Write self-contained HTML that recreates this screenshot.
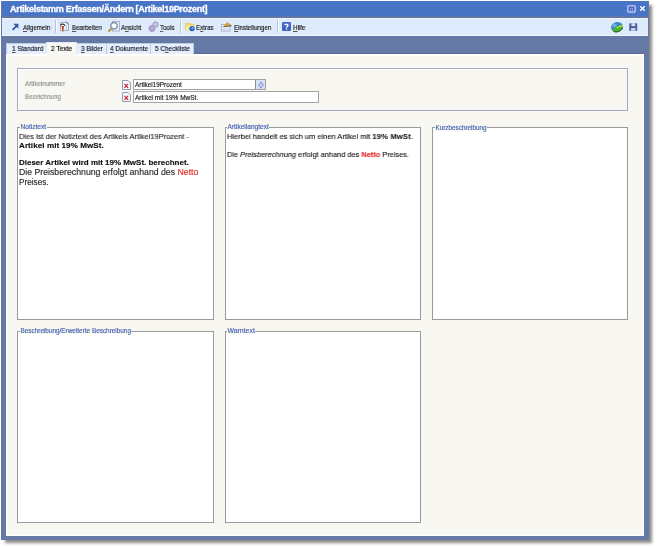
<!DOCTYPE html>
<html><head><meta charset="utf-8">
<style>
*{margin:0;padding:0;box-sizing:border-box}
html,body{width:658px;height:548px;overflow:hidden;background:#fff;font-family:"Liberation Sans",sans-serif}
.a{position:absolute}
.t{position:absolute;white-space:nowrap;line-height:1;will-change:transform;-webkit-text-stroke:0.15px currentColor}
.box{position:absolute;background:#fff;border:1px solid #9a9a9a}
u{text-decoration:underline;text-underline-offset:1px;text-decoration-thickness:0.6px;text-decoration-color:#555}
</style></head><body>
<div class="a" style="left:5px;top:5px;width:647px;height:538px;background:#8a8a88;filter:blur(1.8px)"></div>
<div class="a" style="left:1px;top:1px;width:648px;height:539px;background:#6678a4"></div>
<div class="a" style="left:2px;top:1px;width:646px;height:15px;background:#4874c6"></div>
<div class="a" style="left:1px;top:16px;width:648px;height:2px;background:#6176a6"></div>
<div class="a" style="left:2px;top:18px;width:646px;height:1px;background:#eef5fe"></div>
<div class="a" style="left:2px;top:19px;width:646px;height:16px;background:#deebfd"></div>
<div class="a" style="left:2px;top:35px;width:646px;height:1px;background:#f2f7fe"></div>
<div class="a" style="left:2px;top:36px;width:646px;height:18px;background:#6479a6"></div>
<div class="a" style="left:6px;top:53px;width:638px;height:1px;background:#5b6d9a"></div>
<div class="a" style="left:6px;top:54px;width:638px;height:482px;background:#f8f7f2;border:1px solid #fff;border-top-width:2px"></div>
<div class="t" style="left:10.00px;top:4.90px;font-size:9.1px;color:#fff;font-weight:bold;letter-spacing:-0.34px;-webkit-text-stroke:0.3px #fff;">Artikelstamm Erfassen/Ändern [Artikel19Prozent]</div>
<svg class="a" style="left:627px;top:5px" width="9" height="8" viewBox="0 0 9 8"><rect x="0.4" y="0.4" width="8.2" height="7.2" rx="1.6" fill="#86a0e2" stroke="#c4d2f6" stroke-width="0.8"/><path d="M2.5 5.5V2.3H6.5V5.5" stroke="#3a56a6" stroke-width="0.9" fill="none"/><rect x="4" y="3.8" width="1" height="1.6" fill="#3a56a6"/></svg>
<svg class="a" style="left:639px;top:5px" width="7" height="7" viewBox="0 0 7 7"><path d="M1.2 1.2L5.8 5.8M5.8 1.2L1.2 5.8" stroke="#fff" stroke-width="1.25"/></svg>
<svg class="a" style="left:11px;top:23px" width="8" height="8" viewBox="0 0 8 8"><path d="M1.6 6.9L5.6 2.9" stroke="#3456a8" stroke-width="1.9" fill="none"/><path d="M2.4 0.8H7.4V5.8Z" fill="#3456a8"/></svg>
<div class="t" style="left:22.70px;top:23.50px;font-size:7.4399999999999995px;color:#111;transform:scaleX(0.8333);transform-origin:0 0;"><u>A</u>llgemein</div>
<div class="a" style="left:55px;top:20px;width:1px;height:13px;background:#b9c3d6"></div>
<div class="a" style="left:56px;top:20px;width:1px;height:13px;background:#fff"></div>
<svg class="a" style="left:56px;top:18px" width="16" height="16" viewBox="0 0 16 16"><path d="M4.5 4.5H10.5L12.5 6.5V12.5H4.5Z" fill="#eef3fa" stroke="#a2aec4" stroke-width="1"/><path d="M10.2 3.8L12.8 6.6" stroke="#6a7890" stroke-width="1.1"/><path d="M10.5 7.5V12" stroke="#b4c0d4" stroke-width="1"/><path d="M4.4 7.4C5 5.8 8.2 5.6 9 7.8" stroke="#3c3c40" stroke-width="1.3" fill="none"/><path d="M5.5 8H8.1L7.4 13.3Q6.9 14.3 6.3 13.3Z" fill="#c44a2a"/></svg>
<div class="t" style="left:71.90px;top:23.50px;font-size:7.4399999999999995px;color:#111;transform:scaleX(0.8333);transform-origin:0 0;"><u>B</u>earbeiten</div>
<svg class="a" style="left:104px;top:18px" width="18" height="16" viewBox="0 0 18 16"><rect x="8.5" y="3.5" width="7" height="9.5" fill="#e6eef8" stroke="#a4b2c8"/><circle cx="10" cy="7.8" r="3.2" fill="#f6f9fd" stroke="#7e8ba6" stroke-width="1.3"/><path d="M7.6 10.5L5 13" stroke="#b39652" stroke-width="2.1" stroke-linecap="round"/></svg>
<div class="t" style="left:120.90px;top:23.50px;font-size:7.4399999999999995px;color:#111;transform:scaleX(0.8333);transform-origin:0 0;">A<u>n</u>sicht</div>
<svg class="a" style="left:147.5px;top:20.8px" width="11" height="12" viewBox="0 0 11 12"><circle cx="4" cy="7.5" r="3" fill="#b3aed0" stroke="#9a94bc"/><circle cx="7.5" cy="3.5" r="2.6" fill="#c9c4e0" stroke="#9a94bc"/></svg>
<div class="t" style="left:159.90px;top:23.50px;font-size:7.4399999999999995px;color:#111;transform:scaleX(0.8333);transform-origin:0 0;"><u>T</u>ools</div>
<div class="a" style="left:180px;top:20px;width:1px;height:13px;background:#b9c3d6"></div>
<div class="a" style="left:181px;top:20px;width:1px;height:13px;background:#fff"></div>
<svg class="a" style="left:182px;top:18px" width="16" height="16" viewBox="0 0 16 16"><path d="M3.5 5H7L8 6H12V12H3.5Z" fill="#efd86e" stroke="#e2cc74" stroke-width="0.8"/><path d="M4.5 7.5H13L11.8 12.5H3.5Z" fill="#f9ee9c"/><circle cx="10" cy="10.6" r="2.7" fill="#1f5fc8"/><circle cx="10.4" cy="10.2" r="1.1" fill="#7fb8f4"/></svg>
<div class="t" style="left:196.30px;top:23.50px;font-size:7.4399999999999995px;color:#111;transform:scaleX(0.8333);transform-origin:0 0;">E<u>x</u>tras</div>
<svg class="a" style="left:218px;top:18px" width="16" height="16" viewBox="0 0 16 16"><rect x="3.5" y="6.5" width="8.5" height="6.5" fill="#f2f6fc" stroke="#a6b4ca"/><path d="M3.8 10.5H11.8V12.8H3.8Z" fill="#cfdcee"/><path d="M5 8.8L9.2 4L13.8 7.6Z" fill="#d6a63a"/><path d="M5.2 8.9L13.6 7.7" stroke="#5e4a22" stroke-width="0.9"/></svg>
<div class="t" style="left:233.50px;top:23.50px;font-size:7.4399999999999995px;color:#111;transform:scaleX(0.8333);transform-origin:0 0;"><u>E</u>instellungen</div>
<div class="a" style="left:277px;top:20px;width:1px;height:13px;background:#b9c3d6"></div>
<div class="a" style="left:278px;top:20px;width:1px;height:13px;background:#fff"></div>
<svg class="a" style="left:282px;top:22px" width="9" height="9" viewBox="0 0 9 9"><rect x="0" y="0" width="9" height="9" rx="1.3" fill="#3f62bf"/><path d="M1 1H8V3.5H1Z" fill="#6a88d6" opacity="0.5"/><path d="M3 3.3C3 1.9 6 1.9 6 3.5C6 4.6 4.5 4.6 4.5 5.8" stroke="#fff" stroke-width="1.3" fill="none"/><rect x="3.8" y="6.5" width="1.4" height="1.3" fill="#fff"/></svg>
<div class="t" style="left:293.00px;top:23.50px;font-size:7.4399999999999995px;color:#111;transform:scaleX(0.8333);transform-origin:0 0;"><u>H</u>ilfe</div>
<svg class="a" style="left:610px;top:21px" width="14" height="12" viewBox="0 0 14 12"><ellipse cx="7" cy="6" rx="6" ry="5" transform="rotate(-15 7 6)" fill="#3588c8"/><ellipse cx="4.5" cy="4.5" rx="2.5" ry="1.8" fill="#6ab0e0"/><path d="M2.2 9.8C4 6.2 8.5 3.4 12.9 4.4C13.2 8 10 11.2 5.8 11.2Z" fill="#4cb232"/><path d="M6.5 6.8C8.5 4.8 10.8 4 12.8 4.2L12.9 5.6C11 5.3 9 6 7.2 7.6Z" fill="#e4e048"/><path d="M3.5 10.5C7 11.8 11 10.2 12.7 6.8" stroke="#1f5a1c" stroke-width="1" fill="none"/></svg>
<svg class="a" style="left:629px;top:22.5px" width="9" height="8" viewBox="0 0 9 8"><path d="M0.3 0.3H8.2V7.8H0.3Z" fill="#4a5a9e"/><rect x="2.4" y="0.3" width="3.8" height="2.8" fill="#d8def0"/><rect x="2" y="5" width="4.6" height="2.8" fill="#c8d0e8"/></svg>
<div class="a" style="left:6px;top:43px;width:41px;height:11px;background:#e6eefb;border:1px solid #bccae2;border-bottom:none"></div>
<div class="t" style="left:11.90px;top:45.37px;font-size:7.359999999999999px;color:#0a1428;transform:scaleX(0.8696);transform-origin:0 0;"><u>1</u> Standard</div>
<div class="a" style="left:76px;top:43px;width:31px;height:11px;background:#e6eefb;border:1px solid #bccae2;border-bottom:none"></div>
<div class="t" style="left:80.50px;top:45.37px;font-size:7.359999999999999px;color:#0a1428;transform:scaleX(0.8696);transform-origin:0 0;"><u>3</u> Bilder</div>
<div class="a" style="left:106px;top:43px;width:45px;height:11px;background:#e6eefb;border:1px solid #bccae2;border-bottom:none"></div>
<div class="t" style="left:109.70px;top:45.37px;font-size:7.359999999999999px;color:#0a1428;transform:scaleX(0.8696);transform-origin:0 0;"><u>4</u> Dokumente</div>
<div class="a" style="left:150px;top:43px;width:44px;height:11px;background:#e6eefb;border:1px solid #bccae2;border-bottom:none"></div>
<div class="t" style="left:155.30px;top:45.37px;font-size:7.359999999999999px;color:#0a1428;transform:scaleX(0.8696);transform-origin:0 0;">5 C<u>h</u>eckliste</div>
<div class="a" style="left:46px;top:42px;width:31px;height:12px;background:#f8f7f2;border:1px solid #e4e8f0;border-bottom:none"></div>
<div class="t" style="left:50.60px;top:45.08px;font-size:7.589999999999999px;color:#000;transform:scaleX(0.8696);transform-origin:0 0;">2 Texte</div>
<div class="a" style="left:47px;top:54px;width:29px;height:2px;background:#f8f7f2"></div>
<div class="a" style="left:17px;top:68px;width:611px;height:43px;border:1px solid #a2a9c2;box-shadow:inset 1px 1px 0 #fdfdfb"></div>
<div class="t" style="left:24.70px;top:81.32px;font-size:6.944000000000001px;color:#8e8e8e;transform:scaleX(0.8929);transform-origin:0 0;">Artikelnummer</div>
<div class="t" style="left:24.70px;top:93.52px;font-size:6.944000000000001px;color:#8e8e8e;transform:scaleX(0.8929);transform-origin:0 0;">Bezeichnung</div>
<svg class="a" style="left:121.5px;top:80px" width="9" height="10" viewBox="0 0 9 10"><path d="M0.5 0.5H6L8.5 3V9.5H0.5Z" fill="#f3f6fb" stroke="#8f9dba"/><path d="M2.5 3.9L6.1 7.8M6.1 3.9L2.5 7.8" stroke="#d41f34" stroke-width="1.15"/></svg>
<svg class="a" style="left:121.5px;top:92.3px" width="9" height="10" viewBox="0 0 9 10"><path d="M0.5 0.5H6L8.5 3V9.5H0.5Z" fill="#f3f6fb" stroke="#8f9dba"/><path d="M2.5 3.9L6.1 7.8M6.1 3.9L2.5 7.8" stroke="#d41f34" stroke-width="1.15"/></svg>
<div class="a" style="left:133px;top:79px;width:133px;height:11px;background:#fff;border:1px solid #a3a3a3"></div>
<div class="a" style="left:255px;top:80px;width:10px;height:9px;background:#d9e1f7;border-left:1px solid #8c8c8c"></div>
<svg class="a" style="left:258px;top:81px" width="6" height="8" viewBox="0 0 6 8"><path d="M3 0.7L5.3 4L3 7.3L0.7 4Z" fill="#c3cdf2" stroke="#7d8fd8" stroke-width="0.9"/></svg>
<div class="t" style="left:135.00px;top:82.39px;font-size:6.39px;color:#1a1a1a;">Artikel19Prozent</div>
<div class="a" style="left:133px;top:91px;width:186px;height:12px;background:#fff;border:1px solid #a3a3a3"></div>
<div class="t" style="left:135.00px;top:95.00px;font-size:6.5px;color:#1a1a1a;">Artikel mit 19% MwSt.</div>
<div class="box" style="left:17px;top:127px;width:197px;height:193px"></div>
<div class="t" style="left:19.70px;top:124.41px;font-size:6.6px;color:#4563b3;"><span style="background:#f8f7f2;padding:0 0.5px">Notiztext</span></div>
<div class="box" style="left:225px;top:127px;width:196px;height:193px"></div>
<div class="t" style="left:227.40px;top:124.41px;font-size:6.6px;color:#4563b3;"><span style="background:#f8f7f2;padding:0 0.5px">Artikellangtext</span></div>
<div class="box" style="left:432px;top:127px;width:196px;height:193px"></div>
<div class="t" style="left:434.50px;top:124.73px;font-size:6.34px;color:#4563b3;"><span style="background:#f8f7f2;padding:0 0.5px">Kurzbeschreibung</span></div>
<div class="box" style="left:17px;top:331px;width:197px;height:192px"></div>
<div class="t" style="left:19.70px;top:327.98px;font-size:6.4px;color:#4563b3;"><span style="background:#f8f7f2;padding:0 0.5px">Beschreibung/Erweiterte Beschreibung</span></div>
<div class="box" style="left:225px;top:331px;width:196px;height:192px"></div>
<div class="t" style="left:227.40px;top:327.76px;font-size:6.9px;color:#4563b3;"><span style="background:#f8f7f2;padding:0 0.5px">Warntext</span></div>
<div class="t" style="left:18.70px;top:132.92px;font-size:8.0036px;color:#2a2a2a;transform:scaleX(0.9346);transform-origin:0 0;">Dies ist der Notiztext des Artikels Artikel19Prozent -</div>
<div class="t" style="left:18.70px;top:141.73px;font-size:8.0px;color:#111;font-weight:bold;letter-spacing:0.1px;">Artikel mit 19% MwSt.</div>
<div class="t" style="left:18.70px;top:158.64px;font-size:7.98px;color:#111;font-weight:bold;">Dieser Artikel wird mit 19% MwSt. berechnet.</div>
<div class="t" style="left:18.70px;top:168.42px;font-size:8.72px;color:#2a2a2a;">Die Preisberechnung erfolgt anhand des <span style="color:#e52b2b">Netto</span></div>
<div class="t" style="left:18.70px;top:179.26px;font-size:8.2px;color:#2a2a2a;">Preises.</div>
<div class="t" style="left:226.80px;top:133.11px;font-size:8.025px;color:#222;transform:scaleX(0.9346);transform-origin:0 0;">Hierbei handelt es sich um einen Artikel mit <b style="letter-spacing:0.28px">19% MwSt</b>.</div>
<div class="t" style="left:226.80px;top:150.50px;font-size:7.918000000000001px;color:#222;transform:scaleX(0.9346);transform-origin:0 0;">Die <i>Preisberechnung</i> erfolgt anhand des <b style="color:#e52b2b">Netto</b> Preises.</div>
</body></html>
